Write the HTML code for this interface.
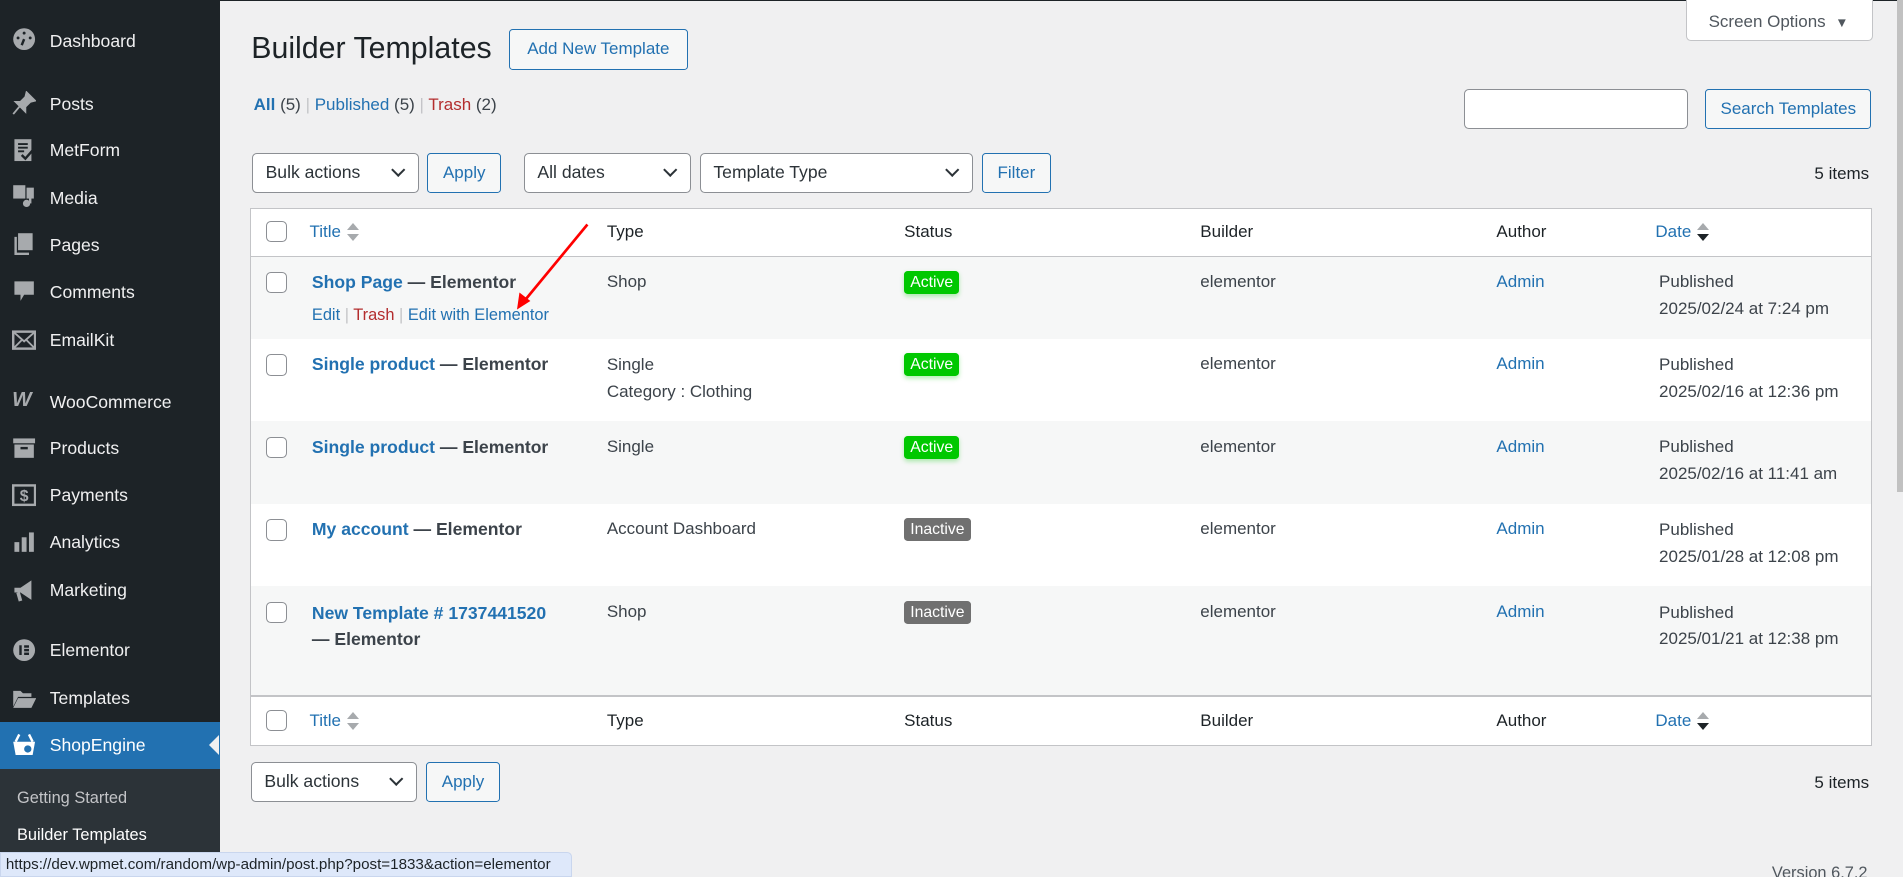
<!DOCTYPE html>
<html><head><meta charset="utf-8">
<style>
html,body{margin:0;padding:0;width:1903px;height:877px;overflow:hidden;background:#f0f0f1}
#w{zoom:1.21365;position:relative;width:1568px;height:723px;font-family:"Liberation Sans",sans-serif;font-size:14px;color:#3c434a;background:#f0f0f1}
.a{position:absolute;white-space:nowrap}
#sb{position:absolute;left:0;top:0;width:181px;height:723px;background:#1d2327}
.mi{position:absolute;left:41px;color:#f0f0f1;font-size:14.5px;line-height:20px}
.ic{position:absolute;left:10px;width:20px;height:20px;color:#a7aaad}
.btn{position:absolute;box-sizing:border-box;border:1px solid #2271b1;border-radius:3px;background:#f6f7f7;color:#2271b1;text-align:center;font-size:14px}
.sel{position:absolute;box-sizing:border-box;border:1px solid #8c8f94;border-radius:4px;background:#fff;color:#2c3338;font-size:14.5px;padding-left:10px}
.sel:after{content:"";position:absolute;right:12px;top:9px;width:7px;height:7px;border-right:2px solid #2c3338;border-bottom:2px solid #2c3338;transform:rotate(45deg)}
.cb{position:absolute;left:219px;width:16px;height:16px;border:1px solid #8c8f94;border-radius:4px;background:#fff}
.lnk{color:#2271b1}
.b{font-weight:bold}
.rt{font-size:14.5px}
.badge{position:absolute;left:745px;height:19px;line-height:19px;padding:0 5px;border-radius:3px;color:#fff;font-size:13px}
.act{background:#00c800;box-shadow:0 2px 4px rgba(0,200,0,.3)}
.ina{background:#707070}
.sort{display:inline-block;vertical-align:middle;margin-left:5px;width:10px;height:16px;position:relative}
.sort:before{content:"";position:absolute;left:0;top:0;border:5px solid transparent;border-bottom:6px solid #a7aaad;border-top:0}
.sort:after{content:"";position:absolute;left:0;top:9px;border:5px solid transparent;border-top:6px solid #a7aaad;border-bottom:0}
.sort.d:after{border-top-color:#1d2327}
</style></head><body><div id="w">
<div class="a" style="left:0;top:0;width:1568px;height:1px;background:#1d2327"></div>
<div id="sb">
 <svg class="ic" style="top:22px" viewBox="0 0 20 20"><circle cx="10" cy="10" r="9" fill="#a7aaad"/><path d="M10 10 L8 15" stroke="#1d2327" stroke-width="2"/><circle cx="5" cy="9" r="1.2" fill="#1d2327"/><circle cx="10" cy="5" r="1.2" fill="#1d2327"/><circle cx="15" cy="9" r="1.2" fill="#1d2327"/></svg>
 <div class="mi" style="top:24px">Dashboard</div>
 <svg class="ic" style="top:75px" viewBox="0 0 20 20"><path d="M12 1 L19 8 L15 9 L11 13 L11 17 L3 9 L7 9 L11 5 Z M6 13 L1 19" fill="#a7aaad" stroke="#a7aaad" stroke-width="1.5"/></svg>
 <div class="mi" style="top:76px">Posts</div>
 <svg class="ic" style="top:114px" viewBox="0 0 20 20"><rect x="2" y="1" width="14" height="18" fill="#a7aaad"/><path d="M5 5h8M5 8h8M5 11h5" stroke="#1d2327" stroke-width="1.5"/><path d="M8 14l3 3 7-8" stroke="#1d2327" stroke-width="2" fill="none"/></svg>
 <div class="mi" style="top:114px">MetForm</div>
 <svg class="ic" style="top:152px" viewBox="0 0 20 20"><rect x="1" y="1" width="10" height="11" fill="#a7aaad"/><rect x="12" y="3" width="6" height="9" fill="#a7aaad"/><circle cx="12" cy="16" r="3" fill="#a7aaad"/><rect x="14" y="8" width="2" height="8" fill="#a7aaad"/></svg>
 <div class="mi" style="top:153px">Media</div>
 <svg class="ic" style="top:191px" viewBox="0 0 20 20"><rect x="5" y="1" width="12" height="14" fill="#a7aaad"/><path d="M3 4v14h11" stroke="#a7aaad" stroke-width="2" fill="none"/></svg>
 <div class="mi" style="top:192px">Pages</div>
 <svg class="ic" style="top:230px" viewBox="0 0 20 20"><path d="M2 2h16v11h-8l-3 5v-5H2z" fill="#a7aaad"/></svg>
 <div class="mi" style="top:231px">Comments</div>
 <svg class="ic" style="top:270px" viewBox="0 0 20 20"><rect x="1" y="3" width="18" height="14" fill="none" stroke="#a7aaad" stroke-width="2"/><path d="M1 3l9 8 9-8M1 17l7-7M19 17l-7-7" stroke="#a7aaad" stroke-width="1.5" fill="none"/></svg>
 <div class="mi" style="top:270px">EmailKit</div>
 <div class="ic" style="top:320px;font-weight:bold;font-style:italic;font-size:17px;color:#a7aaad">W</div>
 <div class="mi" style="top:321px">WooCommerce</div>
 <svg class="ic" style="top:359px" viewBox="0 0 20 20"><rect x="1" y="2" width="18" height="4" fill="#a7aaad"/><rect x="2" y="7" width="16" height="11" fill="#a7aaad"/><rect x="7" y="9" width="6" height="2" fill="#1d2327"/></svg>
 <div class="mi" style="top:359px">Products</div>
 <svg class="ic" style="top:398px" viewBox="0 0 20 20"><rect x="1" y="2" width="18" height="16" fill="none" stroke="#a7aaad" stroke-width="2"/><text x="10" y="15" font-size="13" font-weight="bold" fill="#a7aaad" text-anchor="middle" font-family="Liberation Sans">$</text></svg>
 <div class="mi" style="top:398px">Payments</div>
 <svg class="ic" style="top:437px" viewBox="0 0 20 20"><rect x="2" y="10" width="4" height="8" fill="#a7aaad"/><rect x="8" y="6" width="4" height="12" fill="#a7aaad"/><rect x="14" y="2" width="4" height="16" fill="#a7aaad"/></svg>
 <div class="mi" style="top:437px">Analytics</div>
 <svg class="ic" style="top:476px" viewBox="0 0 20 20"><path d="M2 8h5l9-6v16l-9-6H2z" fill="#a7aaad"/><path d="M5 12l2 7" stroke="#a7aaad" stroke-width="3"/></svg>
 <div class="mi" style="top:476px">Marketing</div>
 <svg class="ic" style="top:526px" viewBox="0 0 20 20"><circle cx="10" cy="10" r="9" fill="#a7aaad"/><rect x="6" y="6" width="2" height="8" fill="#1d2327"/><rect x="10" y="6" width="4" height="2" fill="#1d2327"/><rect x="10" y="9" width="4" height="2" fill="#1d2327"/><rect x="10" y="12" width="4" height="2" fill="#1d2327"/></svg>
 <div class="mi" style="top:526px">Elementor</div>
 <svg class="ic" style="top:565px" viewBox="0 0 20 20"><path d="M1 4h6l2 2h7v3H5L1 17z M5 10h15l-4 8H1z" fill="#a7aaad"/></svg>
 <div class="mi" style="top:565px">Templates</div>
 <div class="a" style="left:0;top:595px;width:181px;height:39px;background:#2271b1"></div>
 <div class="a" style="left:172px;top:606px;border:9px solid transparent;border-right:9px solid #f0f0f1;border-left:0"></div>
 <svg class="ic" style="top:603px" viewBox="0 0 20 20"><path d="M6 2l-3 6M14 2l3 6" stroke="#fff" stroke-width="2"/><path d="M1 8h18l-2 11H3z" fill="#fff"/><circle cx="13" cy="14" r="3" fill="#2271b1"/></svg>
 <div class="mi" style="top:604px;color:#fff">ShopEngine</div>
 <div class="a" style="left:0;top:634px;width:181px;height:89px;background:#2c3338"></div>
 <div class="a" style="left:14px;top:650px;color:#c3c4c7;font-size:13.5px">Getting Started</div>
 <div class="a" style="left:14px;top:681px;color:#fff;font-size:13.5px">Builder Templates</div>
</div>

<div class="a" style="left:207px;top:26px;font-size:25px;color:#1d2327">Builder Templates</div>
<div class="btn" style="left:419px;top:24px;width:148px;height:34px;line-height:32px">Add New Template</div>
<div class="a" style="left:1389px;top:-1px;width:154px;height:35px;box-sizing:border-box;border:1px solid #c3c4c7;border-radius:0 0 4px 4px;background:#fff;color:#50575e;line-height:36px;padding-left:18px">Screen Options <span style="font-size:11px;margin-left:4px">▼</span></div>
<div class="a" style="left:209px;top:78px"><span class="lnk b">All</span> (5) <span style="color:#c3c4c7">|</span> <span class="lnk">Published</span> (5) <span style="color:#c3c4c7">|</span> <span style="color:#b32d2e">Trash</span> (2)</div>
<div class="a" style="left:1206px;top:73px;width:185px;height:33px;box-sizing:border-box;border:1px solid #8c8f94;border-radius:4px;background:#fff"></div>
<div class="btn" style="left:1405px;top:73px;width:137px;height:33px;line-height:31px">Search Templates</div>

<div class="sel" style="left:208px;top:126px;width:137px;height:33px;line-height:31px">Bulk actions</div>
<div class="btn" style="left:352px;top:126px;width:61px;height:33px;line-height:31px">Apply</div>
<div class="sel" style="left:432px;top:126px;width:137px;height:33px;line-height:31px">All dates</div>
<div class="sel" style="left:577px;top:126px;width:225px;height:33px;line-height:31px">Template Type</div>
<div class="btn" style="left:809px;top:126px;width:57px;height:33px;line-height:31px">Filter</div>
<div class="a" style="left:1495px;top:135px;color:#1d2327">5 items</div>

<div class="a" style="left:206px;top:171px;width:1335px;height:442px;border:1px solid #c3c4c7;background:#fff"></div>
<div class="a" style="left:207px;top:211px;width:1335px;height:1px;background:#c3c4c7"></div>
<div class="a" style="left:207px;top:212px;width:1335px;height:67px;background:#f6f7f7"></div>
<div class="a" style="left:207px;top:347px;width:1335px;height:68px;background:#f6f7f7"></div>
<div class="a" style="left:207px;top:483px;width:1335px;height:90px;background:#f6f7f7"></div>
<div class="a" style="left:207px;top:573px;width:1335px;height:1px;background:#c3c4c7"></div>

<div class="cb" style="top:182px"></div>
<div class="a lnk" style="left:255px;top:183px">Title<span class="sort"></span></div>
<div class="a" style="left:500px;top:183px;color:#1d2327">Type</div>
<div class="a" style="left:745px;top:183px;color:#1d2327">Status</div>
<div class="a" style="left:989px;top:183px;color:#1d2327">Builder</div>
<div class="a" style="left:1233px;top:183px;color:#1d2327">Author</div>
<div class="a lnk" style="left:1364px;top:183px">Date<span class="sort d"></span></div>

<div class="cb" style="top:224px"></div>
<div class="a b rt" style="left:257px;top:224px"><span class="lnk">Shop Page</span> — Elementor</div>
<div class="a" style="left:257px;top:252px;font-size:13.5px"><span class="lnk">Edit</span> <span style="color:#c3c4c7">|</span> <span style="color:#b32d2e">Trash</span> <span style="color:#c3c4c7">|</span> <span class="lnk">Edit with Elementor</span></div>
<div class="a" style="left:500px;top:224px">Shop</div>
<div class="badge act" style="top:223px">Active</div>
<div class="a" style="left:989px;top:224px">elementor</div>
<div class="a lnk" style="left:1233px;top:224px">Admin</div>
<div class="a" style="left:1367px;top:222px;line-height:22px">Published<br>2025/02/24 at 7:24 pm</div>

<div class="cb" style="top:292px"></div>
<div class="a b rt" style="left:257px;top:292px"><span class="lnk">Single product</span> — Elementor</div>
<div class="a" style="left:500px;top:290px;line-height:22px">Single<br>Category : Clothing</div>
<div class="badge act" style="top:291px">Active</div>
<div class="a" style="left:989px;top:292px">elementor</div>
<div class="a lnk" style="left:1233px;top:292px">Admin</div>
<div class="a" style="left:1367px;top:290px;line-height:22px">Published<br>2025/02/16 at 12:36 pm</div>

<div class="cb" style="top:360px"></div>
<div class="a b rt" style="left:257px;top:360px"><span class="lnk">Single product</span> — Elementor</div>
<div class="a" style="left:500px;top:360px">Single</div>
<div class="badge act" style="top:359px">Active</div>
<div class="a" style="left:989px;top:360px">elementor</div>
<div class="a lnk" style="left:1233px;top:360px">Admin</div>
<div class="a" style="left:1367px;top:358px;line-height:22px">Published<br>2025/02/16 at 11:41 am</div>

<div class="cb" style="top:428px"></div>
<div class="a b rt" style="left:257px;top:428px"><span class="lnk">My account</span> — Elementor</div>
<div class="a" style="left:500px;top:428px">Account Dashboard</div>
<div class="badge ina" style="top:427px">Inactive</div>
<div class="a" style="left:989px;top:428px">elementor</div>
<div class="a lnk" style="left:1233px;top:428px">Admin</div>
<div class="a" style="left:1367px;top:426px;line-height:22px">Published<br>2025/01/28 at 12:08 pm</div>

<div class="cb" style="top:496px"></div>
<div class="a b rt" style="left:257px;top:494px;line-height:22px"><span class="lnk">New Template # 1737441520</span><br>— Elementor</div>
<div class="a" style="left:500px;top:496px">Shop</div>
<div class="badge ina" style="top:495px">Inactive</div>
<div class="a" style="left:989px;top:496px">elementor</div>
<div class="a lnk" style="left:1233px;top:496px">Admin</div>
<div class="a" style="left:1367px;top:494px;line-height:22px">Published<br>2025/01/21 at 12:38 pm</div>

<div class="cb" style="top:585px"></div>
<div class="a lnk" style="left:255px;top:586px">Title<span class="sort"></span></div>
<div class="a" style="left:500px;top:586px;color:#1d2327">Type</div>
<div class="a" style="left:745px;top:586px;color:#1d2327">Status</div>
<div class="a" style="left:989px;top:586px;color:#1d2327">Builder</div>
<div class="a" style="left:1233px;top:586px;color:#1d2327">Author</div>
<div class="a lnk" style="left:1364px;top:586px">Date<span class="sort d"></span></div>

<div class="sel" style="left:207px;top:628px;width:137px;height:33px;line-height:31px">Bulk actions</div>
<div class="btn" style="left:351px;top:628px;width:61px;height:33px;line-height:31px">Apply</div>
<div class="a" style="left:1495px;top:637px;color:#1d2327">5 items</div>

<svg class="a" style="left:0;top:0" width="1568" height="723"><line x1="484" y1="185" x2="432" y2="248" stroke="#f00" stroke-width="2.2"/><path d="M426 255 L428 241 L437 248 Z" fill="#f00"/></svg>

<div class="a" style="left:1563px;top:0;width:5px;height:405px;background:#c1c1c1"></div>
<div class="a" style="left:1460px;top:712px;color:#50575e;font-size:13.5px">Version 6.7.2</div>
<div class="a" style="left:0;top:702px;width:471px;height:21px;background:#dee8fa;border:1px solid #c9d6ee;box-sizing:border-box;border-radius:0 4px 0 0;color:#1d2327;font-size:12.5px;line-height:20px;padding-left:4px">https://dev.wpmet.com/random/wp-admin/post.php?post=1833&amp;action=elementor</div>
</div></body></html>
